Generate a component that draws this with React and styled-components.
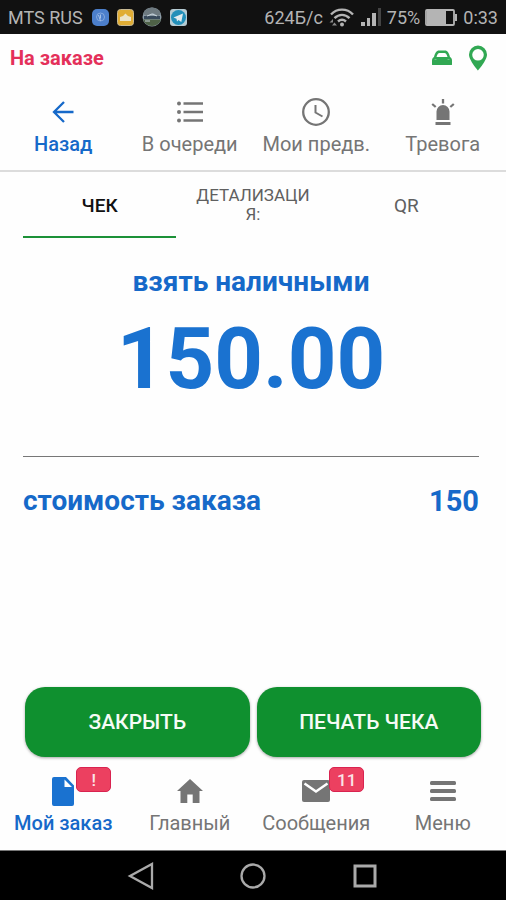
import React, { useState } from 'react'
import styled, { createGlobalStyle } from 'styled-components'

const GlobalStyle = createGlobalStyle`
  * {
    box-sizing: border-box;
  }

  body {
    margin: 0;
    background: #fefefe;
    font-family: Roboto, 'Noto Sans', sans-serif;
  }

  button {
    margin: 0;
    padding: 0;
    border: 0;
    background: none;
    font-family: inherit;
    cursor: pointer;
  }

  svg {
    display: block;
    flex: none;
  }
`

const Screen = styled.div`
  display: flex;
  flex-direction: column;
  min-height: 100vh;
`

const StatusBar = styled.div`
  display: flex;
  align-items: center;
  justify-content: space-between;
  height: 34px;
  padding: 0 8px;
  background: #111;
  color: #b4b4b4;
  font-size: 18px;
`

const StatusGroup = styled.div`
  display: flex;
  align-items: center;
  gap: ${props => props.$gap}px;
`

const OrderBar = styled.div`
  display: flex;
  align-items: center;
  justify-content: space-between;
  height: 48px;
  padding: 0 18px 0 10px;
  color: #e4305a;
  font-size: 20px;
  font-weight: 700;
`

const Markers = styled.div`
  display: flex;
  align-items: center;
  gap: 16px;
`

const Nav = styled.nav`
  display: grid;
  grid-template-columns: repeat(4, 1fr);
  padding: ${props => (props.$top ? '14px 0 12px' : '18px 0 13px')};
  border-bottom: ${props => (props.$top ? '2px solid #dcdcdc' : '1px solid #777')};
`

const NavButton = styled.button`
  display: flex;
  flex-direction: column;
  align-items: center;
  gap: 2px;
  color: ${props => (props.$active ? '#1669c9' : '#757575')};
  font-size: 20px;
  font-weight: ${props => (props.$active ? 500 : 400)};
  line-height: 28px;
  white-space: nowrap;
`

const IconBox = styled.span`
  position: relative;
  display: flex;
  align-items: center;
  justify-content: center;
  width: 32px;
  height: 32px;
`

const Badge = styled.span`
  position: absolute;
  top: -8px;
  left: 29px;
  width: 35px;
  height: 25px;
  border: 1px solid #d92350;
  border-radius: 5px;
  background: #ec4060;
  color: #fbe4e8;
  font-size: 17px;
  font-weight: 500;
  line-height: 24px;
  text-align: center;
`

const Tabs = styled.div`
  display: grid;
  grid-template-columns: repeat(3, 1fr);
  height: 66px;
  margin: 0 23px;
`

const Tab = styled.button`
  padding: 2px 16px 0;
  border-bottom: 2px solid ${props => (props.$active ? '#1c9138' : 'transparent')};
  color: ${props => (props.$active ? '#111' : '#606060')};
  font-size: ${props => (props.$long ? 17 : 19)}px;
  font-weight: ${props => (props.$active ? 500 : 400)};
  line-height: 19px;
  word-break: break-all;
`

const Receipt = styled.main`
  flex: 1;
  padding: 28px 27px 0 23px;
  color: #1669c9;
  font-weight: 700;
`

const Caption = styled.div`
  font-size: 28px;
  line-height: 32px;
  text-align: center;
`

const Total = styled.div`
  padding: 9px 0 45px;
  border-bottom: 1px solid #777;
  color: #1a72d0;
  font-size: 85px;
  line-height: 104px;
  text-align: center;
`

const PriceRow = styled.div`
  display: flex;
  justify-content: space-between;
  padding-top: 28px;
  font-size: 28px;
  line-height: 32px;
`

const Price = styled.span`
  font-size: 29px;
`

const Actions = styled.div`
  display: grid;
  grid-template-columns: 1fr 1fr;
  gap: 7px;
  padding: 0 25px;
`

const ActionButton = styled.button`
  && {
    height: 70px;
    border-radius: 20px;
    background: #0f902f;
    box-shadow: 0 1px 3px rgba(0, 0, 0, 0.35);
    color: #f6fbf6;
    font-size: 21px;
    font-weight: 500;
  }
`

const SystemBar = styled.div`
  display: flex;
  align-items: center;
  justify-content: center;
  gap: 84px;
  height: 49px;
  background: #000;
`

function StatusIcons() {
  return (
    <StatusGroup $gap={8}>
      <svg width="17" height="17" viewBox="0 0 17 17">
        <rect width="17" height="17" rx="5" fill="#4c7fcb" />
        <circle cx="8.500" cy="8" r="4" fill="none" stroke="#86a9dd" />
        <path d="M6.500 6l2 6M8.500 5.500v4" fill="none" stroke="#a9c3e8" />
      </svg>
      <svg width="17" height="17" viewBox="0 0 17 17">
        <rect x=".5" y=".5" width="16" height="16" rx="3" fill="#e0ad35" stroke="#c7b994" />
        <path d="M3 12V8l3-1 2.500-2.500L11 7l3 1v4z" fill="#ece4c9" />
      </svg>
      <svg width="20" height="20" viewBox="0 0 20 20">
        <circle cx="10" cy="10" r="9.500" fill="#8b9aa5" />
        <path d="M1 7a9.500 9.500 0 0 1 18 0l-3 2-5-3-6 3z" fill="#6e7a80" />
        <path d="M2 9h16v3H2z" fill="#394a5b" />
        <path d="M1 12.500h18a9.500 9.500 0 0 1-18 0z" fill="#4e6146" />
        <path d="M5 9l5-2 5 2M3 14h5" fill="none" stroke="#c9d4db" />
      </svg>
      <svg width="17" height="17" viewBox="0 0 17 17">
        <rect width="17" height="17" rx="3" fill="#b5cbd3" />
        <circle cx="8.500" cy="8.500" r="7.500" fill="#228fb9" />
        <path d="M3.500 8.500l9.500-4-1.700 8.500-2.800-2-1.500 1.500-.5-2.800z" fill="#e2ebee" />
      </svg>
    </StatusGroup>
  )
}

function WifiIcon() {
  return (
    <svg width="27" height="20" viewBox="0 0 27 20" fill="none" stroke="#b4b4b4" strokeWidth="2.400">
      <path d="M3 7.500c6-6.500 16-6.500 22 0M6.500 11.200c4.500-4.500 10.500-4.500 15 0M10 14.500c2.500-2.300 5.500-2.300 8 0" />
      <circle cx="14" cy="17.500" r="2" fill="#b4b4b4" stroke="none" />
      <path d="M5 12l-3.500 3.500H5zM4 18.500h5l-2.500-3z" fill="#8a8a8a" stroke="none" />
    </svg>
  )
}

function SignalIcon() {
  return (
    <svg width="22" height="18" viewBox="0 0 22 18">
      <path d="M1 14h4v4H1zM7 10h3v8H7zM12 5h4v13h-4z" fill="#b4b4b4" />
      <path d="M18 0h3v18h-3z" fill="#444" />
    </svg>
  )
}

function BatteryIcon() {
  return (
    <svg width="33" height="17" viewBox="0 0 33 17">
      <rect x="1" y="1" width="28" height="15" rx="1" fill="#111" stroke="#b4b4b4" strokeWidth="1.800" />
      <path d="M2 2h19v13H2zM30 5h2v7h-2z" fill="#b4b4b4" />
    </svg>
  )
}

function CarIcon() {
  return (
    <svg width="20" height="16" viewBox="0 0 20 16">
      <path
        d="M0 10.500C0 8.500 1 7.500 2 7c1-4 2.500-6.500 5-6.500h6c2.500 0 4 2.500 5 6.500 1 .5 2 1.500 2 3.500V14.500q0 .5-1 .5H1q-1 0-1-.5zM4.500 7h11C14.800 4.500 13.800 3 12.500 3h-5C6.200 3 5.200 4.500 4.500 7z"
        fill="#31a853"
        fillRule="evenodd"
      />
      <path d="M2.500 9.500h2M15.500 9.500h2" stroke="#6cc284" />
    </svg>
  )
}

function PinIcon() {
  return (
    <svg width="20" height="26" viewBox="0 0 20 26">
      <path
        d="M10 .5a9 9 0 0 1 9 9c0 6-9 16-9 16s-9-10-9-16a9 9 0 0 1 9-9zm0 3.500a5.800 5.800 0 1 0 0 11.600A5.800 5.800 0 0 0 10 4z"
        fill="#31a853"
        fillRule="evenodd"
      />
    </svg>
  )
}

function BackIcon() {
  return (
    <svg width="22" height="22" viewBox="0 0 22 22" fill="none" stroke="currentColor" strokeWidth="2.300">
      <path d="M21.500 11H1.500M12 1L2 11l10 10" />
    </svg>
  )
}

function ListIcon() {
  return (
    <svg width="26" height="22" viewBox="0 0 26 22" fill="currentColor">
      <circle cx="2" cy="2.500" r="2" />
      <circle cx="2" cy="11" r="2" />
      <circle cx="2" cy="19.500" r="2" />
      <path d="M6.500 1.200H26v2.600H6.500zM6.500 9.700H26v2.600H6.500zM6.500 18.200H26v2.600H6.500z" />
    </svg>
  )
}

function ClockIcon() {
  return (
    <svg width="28" height="28" viewBox="0 0 28 28" fill="none" stroke="currentColor">
      <circle cx="14" cy="14" r="12.800" strokeWidth="2.300" />
      <path d="M13.500 7v7.500l7 4" strokeWidth="2" />
    </svg>
  )
}

function AlarmIcon() {
  return (
    <svg width="24" height="28" viewBox="0 0 24 28" fill="currentColor">
      <path d="M5.500 22V13.500a6.500 6.500 0 0 1 13 0V22zM4.500 24h15v3h-15z" />
      <path d="M12 1v4.500M1.200 6l3.500 3M22.800 6l-3.500 3" fill="none" stroke="currentColor" strokeWidth="2.300" />
    </svg>
  )
}

function OrderIcon() {
  return (
    <svg width="22" height="29" viewBox="0 0 22 29">
      <path d="M2 0h12l8 8.500V27a2 2 0 0 1-2 2H2a2 2 0 0 1-2-2V2a2 2 0 0 1 2-2zm10.500 2.500V10H20z" fill="#1a72d0" fillRule="evenodd" />
    </svg>
  )
}

function HomeIcon() {
  return (
    <svg width="26" height="24" viewBox="0 0 26 24" fill="currentColor">
      <path d="M13 0l13 12h-3.500v12h-6.800v-8.500h-5.400V24H3.500V12H0z" />
    </svg>
  )
}

function MailIcon() {
  return (
    <svg width="28" height="22" viewBox="0 0 28 22">
      <rect width="28" height="22" rx="2" fill="currentColor" />
      <path d="M2.500 3.500L14 11.500l11.500-8" fill="none" stroke="#fff" strokeWidth="2.500" />
    </svg>
  )
}

function MenuIcon() {
  return (
    <svg width="26" height="22" viewBox="0 0 26 22" fill="currentColor">
      <rect width="26" height="4" y="1" rx="1.500" />
      <rect width="26" height="4" y="9" rx="1.500" />
      <rect width="26" height="4" y="17" rx="1.500" />
    </svg>
  )
}

const topLinks = [
  { label: 'Назад', Icon: BackIcon, active: true },
  { label: 'В очереди', Icon: ListIcon },
  { label: 'Мои предв.', Icon: ClockIcon },
  { label: 'Тревога', Icon: AlarmIcon },
]

const bottomLinks = [
  { label: 'Мой заказ', Icon: OrderIcon, active: true, badge: '!' },
  { label: 'Главный', Icon: HomeIcon },
  { label: 'Сообщения', Icon: MailIcon, badge: '11' },
  { label: 'Меню', Icon: MenuIcon },
]

const tabs = ['ЧЕК', 'ДЕТАЛИЗАЦИЯ:', 'QR']

function NavBar(props) {
  const { links, top } = props

  return (
    <Nav $top={top}>
      {links.map(({ label, Icon, active, badge }) => (
        <NavButton key={label} $active={active}>
          <IconBox>
            <Icon />
            {badge && <Badge>{badge}</Badge>}
          </IconBox>
          {label}
        </NavButton>
      ))}
    </Nav>
  )
}

export default function App() {
  const [tab, setTab] = useState('ЧЕК')

  return (
    <Screen>
      <GlobalStyle />
      <StatusBar>
        <StatusGroup $gap={9}>
          MTS RUS
          <StatusIcons />
        </StatusGroup>
        <StatusGroup $gap={5}>
          624Б/с
          <WifiIcon />
          <SignalIcon />
          75%
          <BatteryIcon />
          0:33
        </StatusGroup>
      </StatusBar>
      <OrderBar>
        На заказе
        <Markers>
          <CarIcon />
          <PinIcon />
        </Markers>
      </OrderBar>
      <NavBar links={topLinks} top />
      <Tabs role="tablist">
        {tabs.map(name => (
          <Tab
            key={name}
            role="tab"
            aria-selected={tab === name}
            $active={tab === name}
            $long={name.length > 8}
            onClick={() => setTab(name)}
          >
            {name}
          </Tab>
        ))}
      </Tabs>
      <Receipt>
        <Caption>взять наличными</Caption>
        <Total>150.00</Total>
        <PriceRow>
          <span>стоимость заказа</span>
          <Price>150</Price>
        </PriceRow>
      </Receipt>
      <Actions>
        <ActionButton>ЗАКРЫТЬ</ActionButton>
        <ActionButton>ПЕЧАТЬ ЧЕКА</ActionButton>
      </Actions>
      <NavBar links={bottomLinks} />
      <SystemBar>
        <svg width="28" height="28" viewBox="0 0 28 28" fill="none" stroke="#aaa" strokeWidth="2.300">
          <path d="M25 2v24L3 14z" />
        </svg>
        <svg width="28" height="28" viewBox="0 0 28 28" fill="none" stroke="#aaa" strokeWidth="2.300">
          <circle cx="14" cy="14" r="11.500" />
        </svg>
        <svg width="28" height="28" viewBox="0 0 28 28" fill="none" stroke="#aaa" strokeWidth="3">
          <rect x="4" y="4" width="20" height="20" />
        </svg>
      </SystemBar>
    </Screen>
  )
}
